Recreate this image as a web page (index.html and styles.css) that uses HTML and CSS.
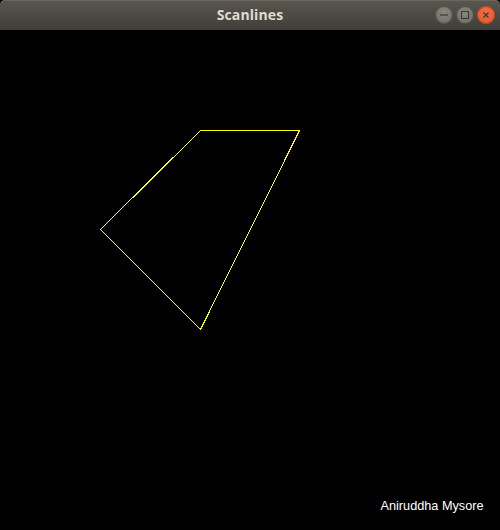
FILE: index.html
```html
<!DOCTYPE html>
<html>
<head>
<meta charset="utf-8">
<link rel="stylesheet" href="styles.css">
</head>
<body>
<div class="window">
  <div class="titlebar">
    <div class="title">Scanlines</div>
    <div class="controls">
      <span class="btn btn-min"><svg width="10" height="10" viewBox="0 0 10 10"><line x1="1" y1="5" x2="9" y2="5" stroke="#3c3b37" stroke-width="1.2"/></svg></span>
      <span class="btn btn-max"><svg width="10" height="10" viewBox="0 0 10 10"><rect x="1.5" y="1.5" width="7" height="7" fill="none" stroke="#3c3b37" stroke-width="1.1"/></svg></span>
      <span class="btn btn-close"><svg width="10" height="10" viewBox="0 0 10 10"><path d="M2.5 2.5L7.5 7.5M7.5 2.5L2.5 7.5" stroke="#3c3b37" stroke-width="1.3"/></svg></span>
    </div>
  </div>
  <div class="canvas">
    <svg class="scene" width="500" height="500" viewBox="0 0 500 500" shape-rendering="crispEdges">
      <polygon points="200.5,100.5 299.5,100.5 200.5,299.5 100.5,199.5" fill="none" stroke="#ffff00" stroke-width="1"/>
      <text x="483.5" y="480" text-anchor="end" class="credit">Aniruddha Mysore</text>
    </svg>
  </div>
</div>
</body>
</html>
```

FILE: styles.css
```css
html, body {
  margin: 0;
  padding: 0;
  background: #000;
}
.window {
  width: 500px;
  height: 530px;
  display: flex;
  flex-direction: column;
  background: #000;
}
.titlebar {
  height: 30px;
  flex: none;
  display: flex;
  align-items: center;
  justify-content: center;
  position: relative;
  background: linear-gradient(#5a564f, #3f3e39);
  border-radius: 5px 5px 0 0;
  box-shadow: inset 0 1px 0 #6a665e;
  padding-bottom: 2px;
  box-sizing: border-box;
}
.title {
  font-family: "Open Sans", "DejaVu Sans", sans-serif;
  font-weight: 700;
  font-size: 14px;
  color: #dfdbd2;
  letter-spacing: 0.1px;
}
.controls {
  position: absolute;
  right: 5px;
  top: 6px;
  display: flex;
  gap: 3px;
}
.btn {
  width: 18px;
  height: 18px;
  border-radius: 50%;
  display: flex;
  align-items: center;
  justify-content: center;
}
.btn-min, .btn-max {
  background: radial-gradient(circle at 50% 35%, #8a8780, #6b6962);
  box-shadow: inset 0 0 0 1px #4a4843;
}
.btn-close {
  background: radial-gradient(circle at 50% 35%, #f36f3f, #e0532a);
  box-shadow: inset 0 0 0 1px #b6441f;
}
.canvas {
  flex: 1;
  background: #000;
}
.scene {
  display: block;
}
.credit {
  font-family: "Liberation Sans", Arial, sans-serif;
  font-size: 12.7px;
  fill: #ffffff;
}
```
